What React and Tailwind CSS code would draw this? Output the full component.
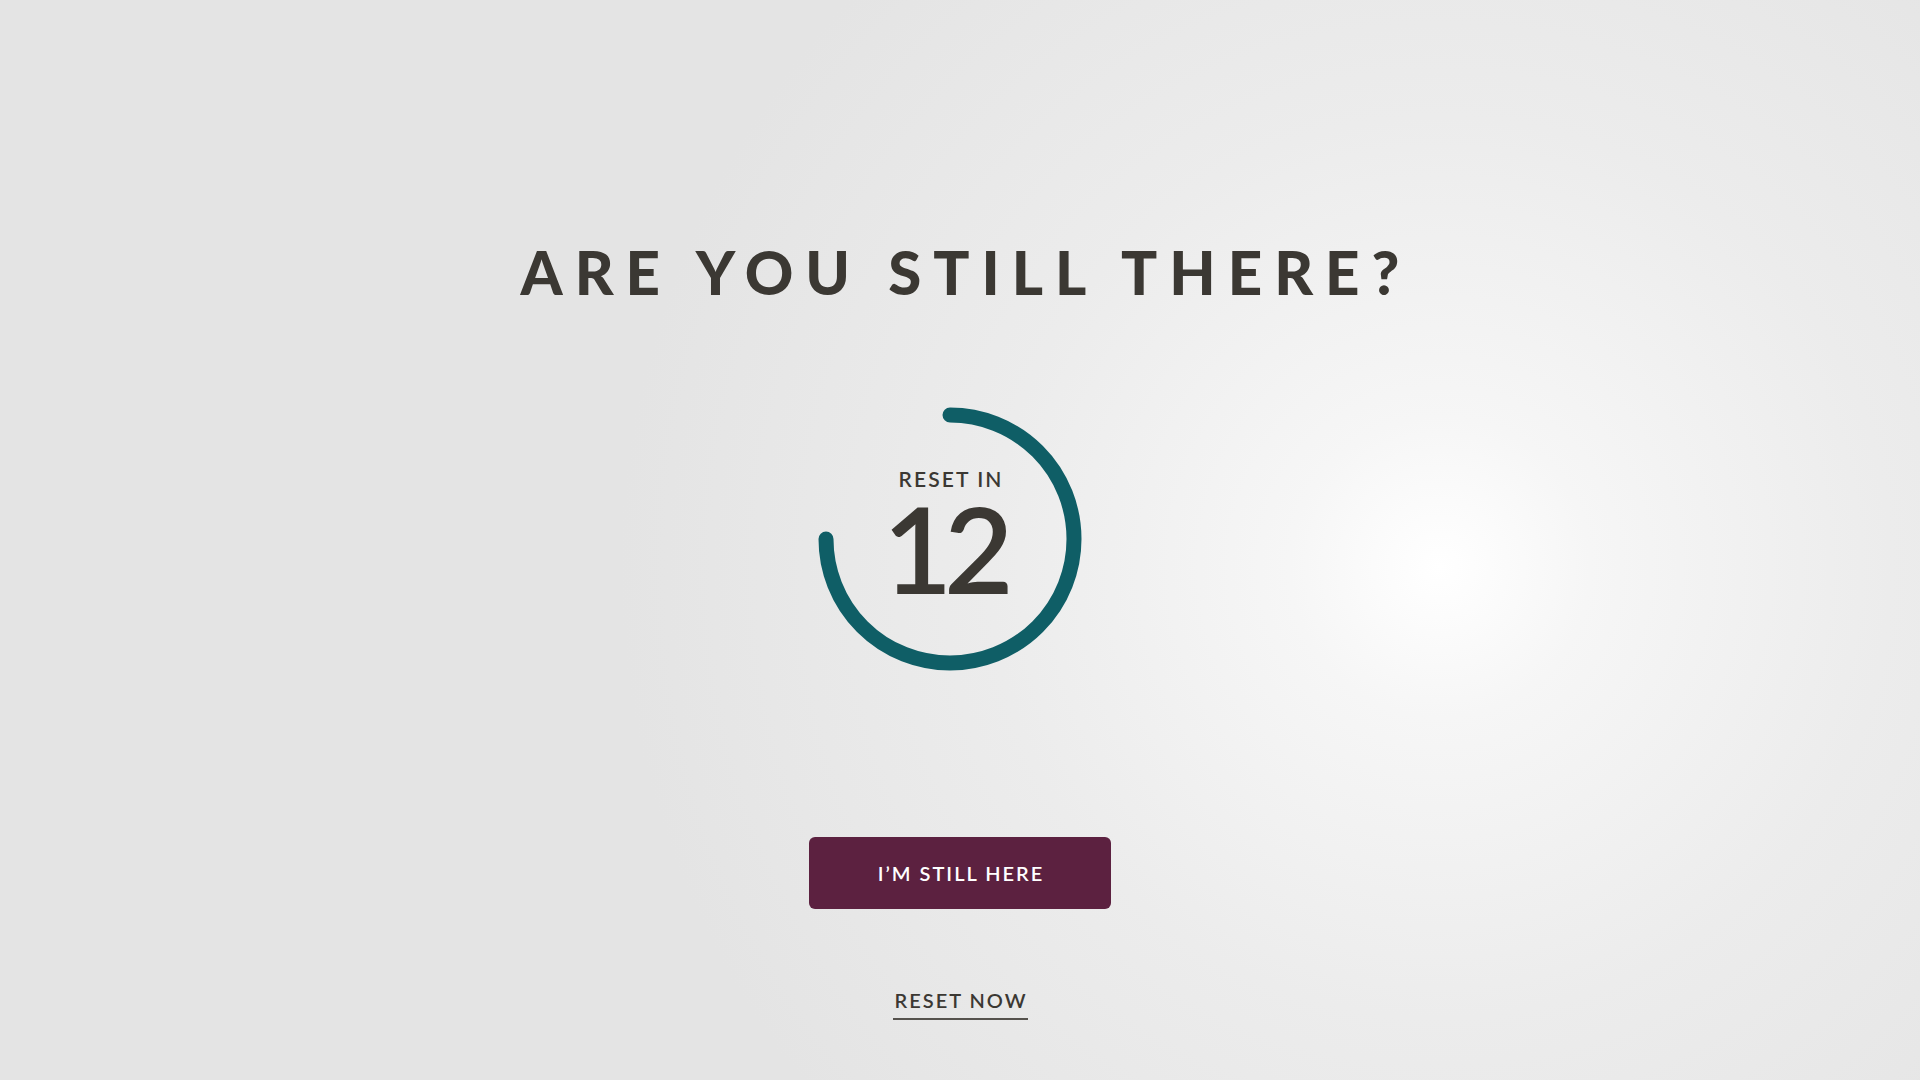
import React from 'react';

export default function App() {
  return (
    <div className="min-h-screen w-full flex flex-col items-center bg-[radial-gradient(circle_at_1440px_567px,#ffffff_0px,#f6f6f6_150px,#ececec_450px,#e4e4e4_820px)] font-['Lato','Open_Sans',sans-serif] text-[#3b3833]">
      <h1 className="mt-[236px] pl-[0.2em] text-[60px] leading-[72px] font-black tracking-[0.2em]">
        ARE YOU STILL THERE?
      </h1>

      {/* countdown ring */}
      <div className="relative mt-[96px] mr-[20px] w-[270px] h-[270px]">
        <svg width="270" height="270" viewBox="0 0 270 270" className="block">
          <path
            d="M135 11 A124 124 0 1 1 11 135"
            fill="none"
            stroke="#0f5e66"
            strokeWidth="15"
            strokeLinecap="round"
          />
        </svg>
        <div className="absolute inset-0 flex flex-col items-center">
          <div className="mt-[63px] pl-[0.1em] text-[21px] leading-[24px] font-semibold tracking-[0.1em]">RESET IN</div>
          <div className="mt-[2px] pr-[12px] text-[120px] leading-[110px] font-semibold tracking-[-0.07em]">12</div>
        </div>
      </div>

      <button className="mt-[163px] w-[302px] h-[72px] rounded-[6px] bg-[#5c2140] text-white text-[20px] font-semibold tracking-[0.1em] pl-[0.1em]">
        I’M STILL HERE
      </button>

      <button className="mt-[77px] pl-[0.1em] text-[20px] leading-[28px] font-semibold tracking-[0.1em] text-[#3b3833] border-b-2 border-[#55524d] pb-[4px]">
        RESET NOW
      </button>
    </div>
  );
}
